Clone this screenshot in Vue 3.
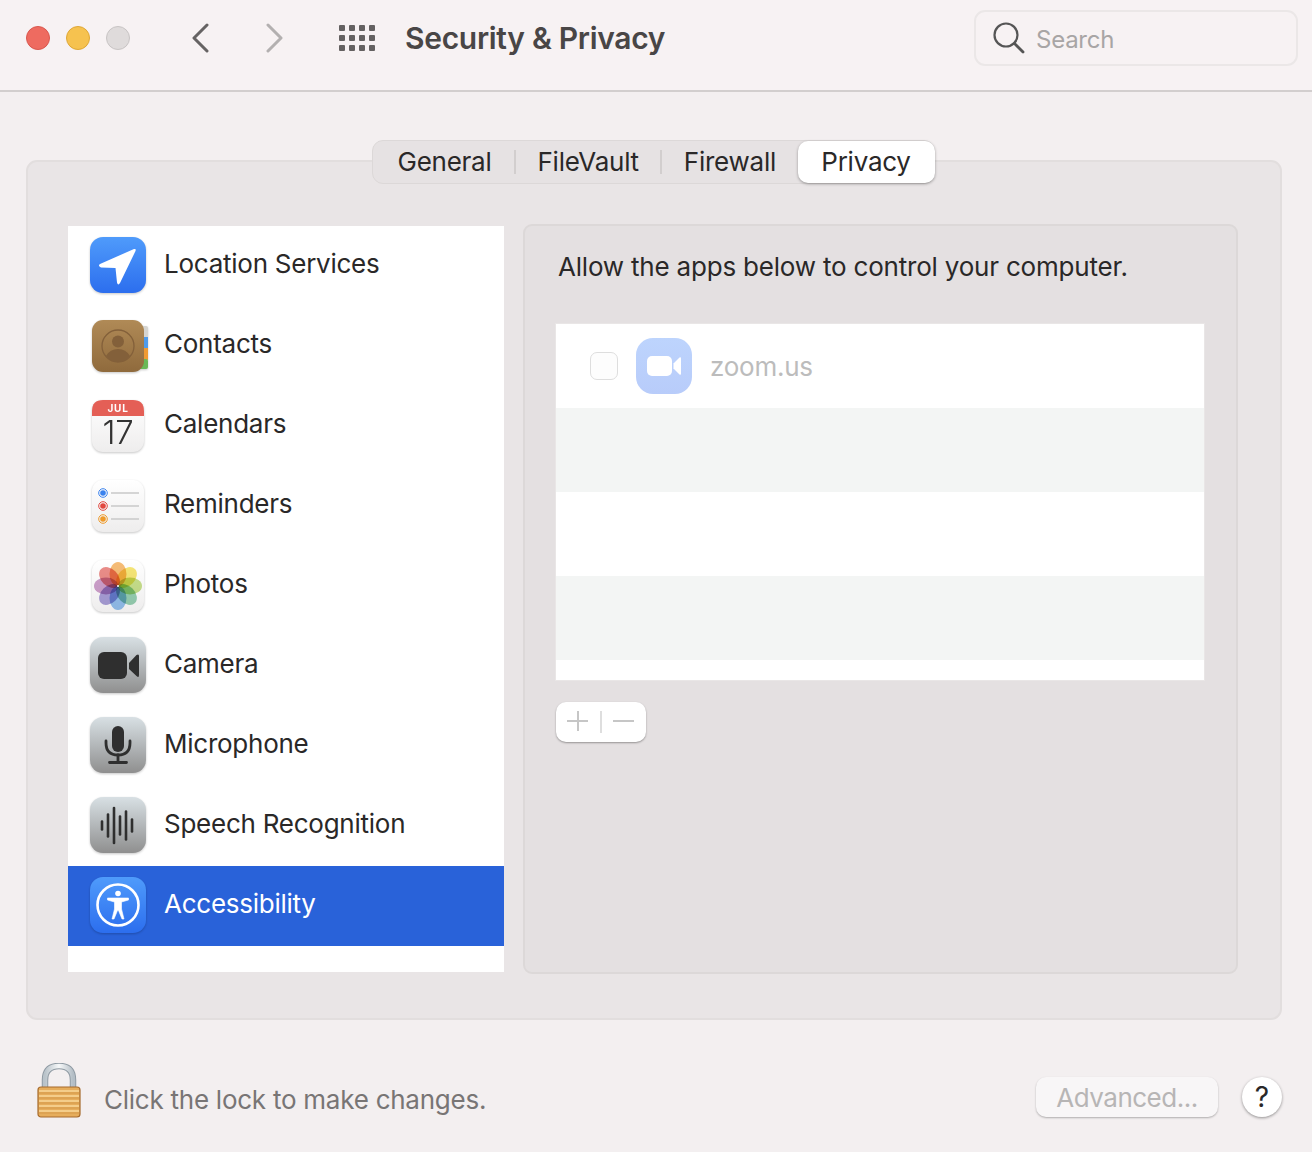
<template>
  <div class="window">
    <header class="toolbar">
      <div class="lights">
        <span class="light red"></span>
        <span class="light yellow"></span>
        <span class="light grey"></span>
      </div>
      <svg class="chev back" width="20" height="30" viewBox="0 0 20 30"><path d="M17 2 L4 15 L17 28" fill="none" stroke="#666363" stroke-width="3" stroke-linecap="round" stroke-linejoin="round" /></svg>
      <svg class="chev fwd" width="20" height="30" viewBox="0 0 20 30"><path d="M3 2 L16 15 L3 28" fill="none" stroke="#b3b0b0" stroke-width="3" stroke-linecap="round" stroke-linejoin="round" /></svg>
      <div class="grid-icon">
        <span v-for="n in 12" :key="n"></span>
      </div>
      <h1 class="title">Security &amp; Privacy</h1>
      <div class="search">
        <svg width="34" height="34" viewBox="0 0 34 34"><circle cx="14" cy="14" r="11.5" fill="none" stroke="#555" stroke-width="2.2" /><path d="M22.5 22.5 L31 31" stroke="#555" stroke-width="2.8" stroke-linecap="round" /></svg>
        <span class="search-label">Search</span>
      </div>
    </header>

    <main class="content">
      <nav class="tabs">
        <span class="tab">General</span>
        <i class="sep"></i>
        <span class="tab">FileVault</span>
        <i class="sep"></i>
        <span class="tab">Firewall</span>
        <span class="tab active">Privacy</span>
      </nav>

      <section class="panel">
        <ul class="services">
          <li v-for="item in services" :key="item.name" :class="{ selected: item.name === 'Accessibility' }">
            <svg class="app-icon" :class="{ low: item.low }" width="60" height="60" viewBox="0 0 60 60">
              <defs>
                <linearGradient id="blue" x1="0" y1="0" x2="0" y2="1"><stop offset="0" stop-color="#4f9bfb" /><stop offset="1" stop-color="#2c6eee" /></linearGradient>
                <linearGradient id="metal" x1="0" y1="0" x2="0" y2="1"><stop offset="0" stop-color="#d8e0e4" /><stop offset="1" stop-color="#8f8f8f" /></linearGradient>
                <linearGradient id="paper" x1="0" y1="0" x2="0" y2="1"><stop offset="0" stop-color="#ffffff" /><stop offset="1" stop-color="#eeeded" /></linearGradient>
                <linearGradient id="leather" x1="0" y1="0" x2="0" y2="1"><stop offset="0" stop-color="#b08a56" /><stop offset="1" stop-color="#8f6a3c" /></linearGradient>
              </defs>

              <template v-if="item.icon === 'location'">
                <rect x="2" y="2" width="56" height="56" rx="13" fill="url(#blue)" />
                <path d="M12 29 L46 14 Q48.500 13.500 47.500 16 L32 48 Q30 51 29 47.500 L27.500 33 L13 32.500 Q9.500 31 12 29 Z" fill="#fff" />
              </template>

              <template v-else-if="item.icon === 'contacts'">
                <rect x="50" y="9" width="10" height="12" rx="2" fill="#d5d4d0" />
                <rect x="50" y="20" width="10" height="12" fill="#4f9bea" />
                <rect x="50" y="31" width="10" height="12" fill="#ef9a32" />
                <rect x="50" y="42" width="10" height="10" rx="2" fill="#69b857" />
                <rect x="4" y="3" width="52" height="52" rx="11" fill="url(#leather)" />
                <circle cx="30" cy="29" r="16" fill="none" stroke="#83603a" stroke-width="1.300" />
                <circle cx="30" cy="24.500" r="6" fill="#83603a" />
                <path d="M18 39 Q22 32 30 32 Q38 32 42 39 Q37 45 30 45 Q23 45 18 39 Z" fill="#83603a" />
              </template>

              <template v-else-if="item.icon === 'calendar'">
                <rect x="4" y="3" width="52" height="52" rx="11" fill="url(#paper)" />
                <path d="M4 19 V14 Q4 3 15 3 H45 Q56 3 56 14 V19 Z" fill="#e45f56" />
                <text x="30" y="14.500" text-anchor="middle" class="cal-month">JUL</text>
                <text x="30" y="47" text-anchor="middle" class="cal-day">17</text>
              </template>

              <template v-else-if="item.icon === 'reminders'">
                <rect x="4" y="3" width="52" height="52" rx="11" fill="url(#paper)" />
                <g v-for="row in reminderRows" :key="row.color">
                  <circle cx="15" :cy="row.y" r="4.300" fill="none" :stroke="row.color" stroke-width="1" />
                  <circle cx="15" :cy="row.y" r="2.800" :fill="row.color" />
                  <path :d="`M23 ${row.y} H51`" stroke="#c9c8c8" stroke-width="1.500" />
                </g>
              </template>

              <template v-else-if="item.icon === 'photos'">
                <rect x="4" y="3" width="52" height="52" rx="11" fill="url(#paper)" />
                <ellipse v-for="(color, i) in petals" :key="color" cx="30" cy="17" rx="8.500" ry="12" :fill="color" opacity="0.650" style="mix-blend-mode: multiply" :transform="`rotate(${i * 45} 30 29)`" />
                <circle cx="30" cy="29" r="1" fill="#fff" />
              </template>

              <template v-else-if="item.icon === 'camera'">
                <rect x="2" y="2" width="56" height="56" rx="13" fill="url(#metal)" />
                <rect x="10" y="17" width="29" height="27" rx="6" fill="#2f2f2f" />
                <path d="M41 28 L48.500 20 Q51 18.500 51 21 V40 Q51 43.500 48.500 41 L41 34 Z" fill="#2f2f2f" />
              </template>

              <template v-else-if="item.icon === 'mic'">
                <rect x="2" y="2" width="56" height="56" rx="13" fill="url(#metal)" />
                <rect x="24" y="11" width="12" height="26" rx="6" fill="#2f2f2f" />
                <path d="M18 26 V28 Q18 40 30 40 Q42 40 42 28 V26" fill="none" stroke="#2f2f2f" stroke-width="2.800" stroke-linecap="round" />
                <path d="M30 40 V47 M21.500 47.500 H38.500" stroke="#2f2f2f" stroke-width="2.800" stroke-linecap="round" />
              </template>

              <template v-else-if="item.icon === 'speech'">
                <rect x="2" y="2" width="56" height="56" rx="13" fill="url(#metal)" />
                <path v-for="bar in speechBars" :key="bar.x" :d="`M${bar.x} ${30.500 - bar.h} V${30.500 + bar.h}`" stroke="#2f2f2f" stroke-width="2.600" stroke-linecap="round" />
              </template>

              <template v-else>
                <rect x="2" y="2" width="56" height="56" rx="13" fill="url(#blue)" />
                <circle cx="30" cy="30" r="20.500" fill="none" stroke="#fff" stroke-width="2.600" />
                <circle cx="30" cy="18.500" r="2.800" fill="#fff" />
                <path d="M19.500 23 H40.500 V25 L33.500 27 V34 L36 44 H34 L30.500 35.500 H29.500 L26 44 H24 L26.500 34 V27 L19.500 25 Z" fill="#fff" stroke="#fff" stroke-width="0.600" stroke-linejoin="round" />
              </template>
            </svg>
            <span class="service-name">{{ item.name }}</span>
          </li>
        </ul>

        <div class="detail">
          <p class="detail-text">Allow the apps below to control your computer.</p>
          <div class="app-list">
            <div class="app-row first">
              <span class="check"></span>
              <svg width="56" height="56" viewBox="0 0 56 56">
                <defs><linearGradient id="zoom" x1="0" y1="0" x2="0" y2="1"><stop offset="0" stop-color="#bdd4fd" /><stop offset="1" stop-color="#b8ccfa" /></linearGradient></defs>
                <rect width="56" height="56" rx="17" fill="url(#zoom)" />
                <rect x="11" y="18" width="25" height="20" rx="5" fill="#fff" />
                <path d="M37.500 25.500 L43.500 19.500 Q45 18.500 45 20.500 V35.500 Q45 37.500 43.500 36.500 L37.500 30.500 Z" fill="#fff" />
              </svg>
              <span class="app-name">zoom.us</span>
            </div>
            <div class="app-row alt"></div>
            <div class="app-row"></div>
            <div class="app-row alt"></div>
          </div>
          <div class="add-remove">
            <svg width="90" height="40" viewBox="0 0 90 40">
              <path d="M22 9 V29 M11 19 H32" stroke="#c6c6c6" stroke-width="2" />
              <path d="M45 9 V31" stroke="#dedede" stroke-width="2" />
              <path d="M57 19 H78" stroke="#c6c6c6" stroke-width="2" />
            </svg>
          </div>
        </div>
      </section>

      <footer class="footer">
        <svg class="lock" width="44" height="56" viewBox="0 0 44 56">
          <defs>
            <linearGradient id="shackle" x1="0" y1="0" x2="1" y2="0"><stop offset="0" stop-color="#b9c3ca" /><stop offset="0.500" stop-color="#f6f8f9" /><stop offset="1" stop-color="#b4bec6" /></linearGradient>
          </defs>
          <path d="M8 24 V17 Q8 3 22 3 Q36 3 36 17 V24" fill="none" stroke="#8f9aa3" stroke-width="6.500" />
          <path d="M8 24 V17 Q8 3 22 3 Q36 3 36 17 V24" fill="none" stroke="url(#shackle)" stroke-width="4.500" />
          <rect x="1" y="24" width="42" height="30" rx="3" fill="#e6ad5c" stroke="#a66a2c" stroke-width="1.200" />
          <path v-for="y in lockLines" :key="y" :d="`M2 ${y} H42`" stroke="#f8d99a" stroke-width="1.600" />
          <path v-for="y in lockLines" :key="`d${y}`" :d="`M2 ${y + 2} H42`" stroke="#cf9648" stroke-width="0.800" />
        </svg>
        <span class="lock-text">Click the lock to make changes.</span>
        <button class="advanced" type="button">Advanced...</button>
        <button class="help" type="button">?</button>
      </footer>
    </main>
  </div>
</template>

<script setup>
const services = [
  { name: 'Location Services', icon: 'location' },
  { name: 'Contacts', icon: 'contacts', low: true },
  { name: 'Calendars', icon: 'calendar', low: true },
  { name: 'Reminders', icon: 'reminders', low: true },
  { name: 'Photos', icon: 'photos', low: true },
  { name: 'Camera', icon: 'camera' },
  { name: 'Microphone', icon: 'mic' },
  { name: 'Speech Recognition', icon: 'speech' },
  { name: 'Accessibility', icon: 'access' }
]

const reminderRows = [
  { y: 16, color: '#3a82ee' },
  { y: 29, color: '#e2483f' },
  { y: 42, color: '#ee9a2a' }
]

const petals = ['#f29a2e', '#f2d92e', '#a9cf4c', '#5fb98a', '#5aa0e6', '#7b6bc4', '#b46cb0', '#e0504a']

const speechBars = [
  { x: 14, h: 4 },
  { x: 20, h: 11 },
  { x: 26, h: 17.5 },
  { x: 32, h: 9 },
  { x: 38, h: 14 },
  { x: 44, h: 6 }
]

const lockLines = [28, 33, 38, 43, 48]
</script>

<style>
html,
body {
  background: #f3eff0;
}
</style>

<style scoped>
.window {
  width: 1312px;
  height: 1152px;
  background: #f3eff0;
  font-family: Inter, "Liberation Sans", sans-serif;
  letter-spacing: -0.25px;
  color: #2a2828;
  overflow: hidden;
}

.toolbar {
  height: 92px;
  box-sizing: border-box;
  display: flex;
  align-items: center;
  background: #f7f2f3;
  border-bottom: 2px solid #d2cece;
  padding: 0 14px 14px 26px;
}

.lights {
  display: flex;
  gap: 16px;
}

.light {
  width: 24px;
  height: 24px;
  border-radius: 50%;
  box-sizing: border-box;
}

.red { background: #ee6b60; border: 1px solid #d9574e; }
.yellow { background: #f6c24f; border: 1px solid #dfa736; }
.grey { background: #dfdbdb; border: 1px solid #c8c4c4; }

.chev.back { margin-left: 60px; }
.chev.fwd { margin-left: 55px; }

.grid-icon {
  margin-left: 54px;
  width: 36px;
  display: grid;
  grid-template-columns: repeat(4, 6px);
  row-gap: 4px;
  justify-content: space-between;
}

.grid-icon span {
  width: 6px;
  height: 6px;
  background: #646161;
  border-radius: 1px;
}

.title {
  margin: 0 0 0 30px;
  font-size: 30px;
  font-weight: 600;
  letter-spacing: -0.3px;
  color: #494646;
}

.search {
  margin-left: auto;
  width: 324px;
  height: 56px;
  box-sizing: border-box;
  display: flex;
  align-items: center;
  gap: 10px;
  padding-left: 16px;
  border: 2px solid #ebe7e7;
  border-radius: 11px;
  color: #a8a5a5;
  font-size: 24px;
}

.search svg { flex: none; }

.search-label { padding-top: 2px; }

.content {
  padding: 48px 30px 0 26px;
  display: flex;
  flex-direction: column;
}

.tabs {
  align-self: center;
  position: relative;
  z-index: 1;
  display: flex;
  align-items: center;
  height: 44px;
  box-sizing: border-box;
  margin: 0 0 -24px -2px;
  width: 563px;
  background: #e6e2e3;
  border: 1px solid #dcd8d8;
  border-radius: 11px;
  font-size: 26px;
  padding-left: 25px;
}

.tab {
  color: #2a2828;
  white-space: nowrap;
  box-sizing: border-box;
  padding-bottom: 2px;
}

.tab:nth-child(3) { margin: 0 21px 0 22px; }
.tab:nth-child(5) { margin-left: 22px; }

.sep {
  width: 2px;
  height: 24px;
  background: #d2cece;
  margin-left: 22px;
}

.tab:nth-child(3) + .sep { margin-left: 0; }

.tab.active {
  margin-left: auto;
  width: 137px;
  height: 42px;
  margin-right: -1px;
  display: flex;
  align-items: center;
  justify-content: center;
  background: #fff;
  border-radius: 10px;
  box-shadow: 0 1px 3px rgba(0, 0, 0, 0.35);
}

.panel {
  display: flex;
  align-items: flex-start;
  width: 1256px;
  height: 860px;
  box-sizing: border-box;
  padding: 64px 42px 0 40px;
  gap: 19px;
  background: #e9e5e6;
  border: 2px solid #e2dede;
  border-radius: 11px;
}

.services {
  list-style: none;
  margin: 0;
  padding: 0;
  width: 436px;
  height: 746px;
  flex: none;
  background: #fff;
}

.services li {
  height: 80px;
  display: flex;
  align-items: center;
  padding-left: 20px;
  font-size: 26px;
  color: #2a2828;
}

.services li.selected {
  background: #2962d9;
  color: #fff;
}

.app-icon {
  flex: none;
  margin-top: -2px;
  filter: drop-shadow(0 1px 1px rgba(0, 0, 0, 0.22));
}

.app-icon.low { transform: translateY(2px); }

.service-name {
  margin-left: 16px;
  margin-top: -5px;
}

.cal-month {
  font-size: 10px;
  font-weight: 700;
  letter-spacing: 0.8px;
  fill: #fff;
}

.cal-day {
  font-size: 33px;
  font-weight: 300;
  fill: #333;
}

.detail {
  flex: 1;
  height: 750px;
  margin-top: -2px;
  box-sizing: border-box;
  padding: 0 31px 0 30px;
  background: #e4e0e1;
  border: 2px solid #dcd8d8;
  border-radius: 9px;
}

.detail-text {
  margin: 23px 0 0 3px;
  font-size: 26px;
  line-height: 36px;
  letter-spacing: -0.2px;
  color: #2a2828;
}

.app-list {
  margin-top: 38px;
  height: 358px;
  background: #fff;
  border: 1px solid #e9e6e6;
  box-sizing: border-box;
}

.app-row {
  height: 84px;
  display: flex;
  align-items: center;
}

.app-row.alt { background: #f3f5f4; }

.app-row.first { padding-left: 34px; }

.check {
  width: 28px;
  height: 28px;
  box-sizing: border-box;
  background: #fdfdfd;
  border: 1px solid #dedede;
  border-radius: 7px;
  margin-right: 18px;
}

.app-name {
  margin-left: 18px;
  font-size: 26px;
  color: #bcbcbc;
}

.add-remove {
  margin: 21px 0 0 1px;
  width: 90px;
  height: 40px;
  background: #fff;
  border-radius: 10px;
  box-shadow: 0 1px 2px rgba(0, 0, 0, 0.35);
}

.add-remove svg { display: block; }

.footer {
  height: 132px;
  box-sizing: border-box;
  display: flex;
  align-items: center;
  padding: 10px 0 0 11px;
}

.lock {
  flex: none;
}

.lock-text {
  margin-left: 23px;
  margin-top: 16px;
  font-size: 26px;
  color: #787575;
}

.advanced {
  margin-left: auto;
  width: 182px;
  height: 40px;
  margin-top: 12px;
  border: none;
  border-radius: 10px;
  background: #f8f6f7;
  box-shadow: 0 1px 2px rgba(0, 0, 0, 0.28);
  color: #b7b5b5;
  font: 26px Inter, "Liberation Sans", sans-serif;
  letter-spacing: -0.5px;
  padding: 0;
}

.help {
  margin-left: 24px;
  margin-top: 12px;
  width: 40px;
  height: 40px;
  border: none;
  border-radius: 50%;
  background: #fff;
  box-shadow: 0 1px 3px rgba(0, 0, 0, 0.4);
  color: #2a2828;
  font: 28px Inter, "Liberation Sans", sans-serif;
  padding: 0;
}
</style>
